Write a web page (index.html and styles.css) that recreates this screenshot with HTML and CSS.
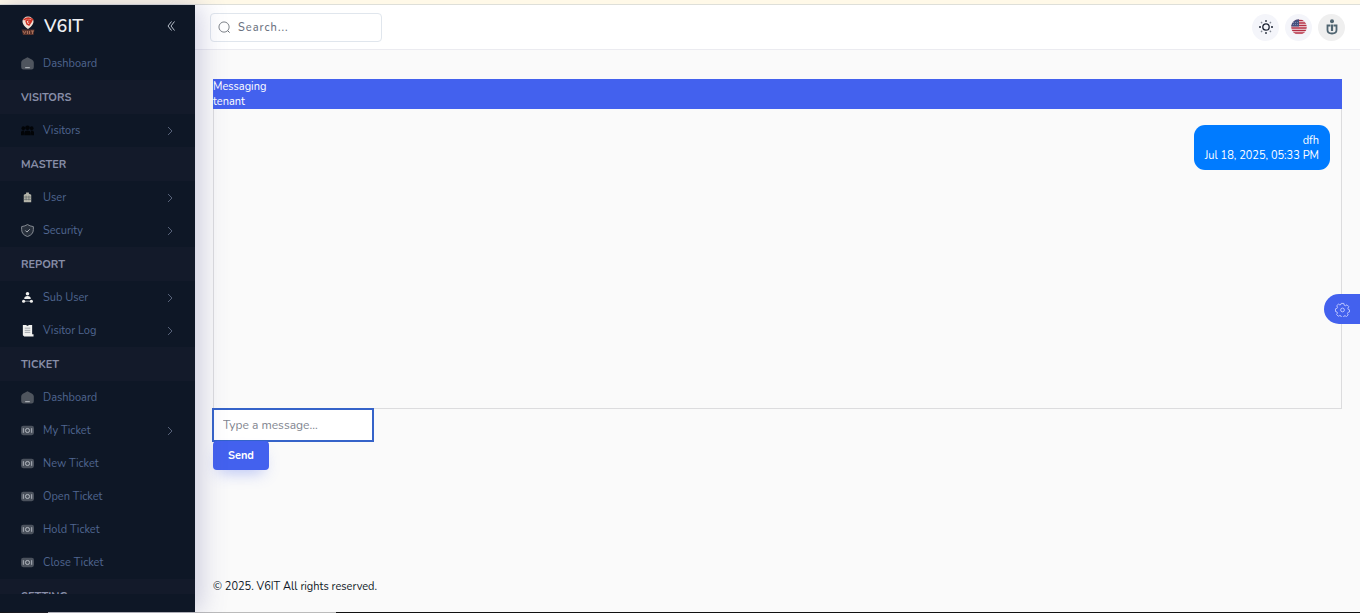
FILE: index.html
```html
<!DOCTYPE html>
<html lang="en">
<head>
    <meta charset="utf-8">
    <title>V6IT</title>
    <link rel="stylesheet" href="styles.css">
</head>
<body>
    <svg class="sprite" aria-hidden="true">
        <symbol id="home" viewBox="0 0 14 14">
            <path d="M7 .2 12 3Q13.800 4 13.800 6v5q0 2.500-2.500 2.500H2.700Q.2 13.500.2 11V6Q.2 4 2 3Z" fill="#4f555e"/>
            <path d="M4.500 11.500h5" stroke="#c3c7cc"/>
        </symbol>
        <symbol id="ticket" viewBox="0 0 14 14">
            <rect x="0" y="2" width="14" height="10" rx="2.500" fill="#4b525d"/>
            <path d="M2.500 4.500v5M11.500 4.500v5" stroke="#b5bac2"/>
            <circle cx="7" cy="7" r="2.200" fill="none" stroke="#b8bdc5"/>
        </symbol>
        <symbol id="chevron" viewBox="0 0 8 10">
            <path d="M2 1 6 5 2 9" fill="none" stroke="#566178"/>
        </symbol>
    </svg>

    <div class="top-strip"></div>
    <div class="layout">
        <nav class="sidebar">
            <div class="brand">
                <svg class="brand-logo" viewBox="0 0 16 20">
                    <path d="M8 .5a5.500 5 0 0 1 5.500 5c0 3-3.500 6.500-5.500 7.500-2-1-5.500-4.500-5.500-7.500a5.500 5 0 0 1 5.500-5Z" fill="#f1e3d8"/>
                    <path d="M3.500 4Q8 .5 12.500 3.500L11 5Q8 3 6 5l1 3 2 1 2-3H8" fill="none" stroke="#cf3326" stroke-width="1.500"/>
                    <path d="M1.500 13.500h13l-1 5.500H3Z" fill="#59332c"/>
                    <path d="M3 15l1.500 2.500L6 15M7.500 15v3M9.500 15v3M11 15h3M12.500 15v3" stroke="#a8705a" fill="none"/>
                </svg>
                <span class="brand-name">V6IT</span>
                <button class="collapse" type="button" aria-label="Collapse menu">
                    <svg viewBox="0 0 10 12"><path d="M5.500 1.500 2 6l3.500 4.500M8.500 1.500 5 6l3.500 4.500" fill="none" stroke="#b8c0cc"/></svg>
                </button>
            </div>
            <div class="menu">
                <a class="item" href="#"><svg class="icon"><use href="#home"/></svg>Dashboard</a>
                <h2>VISITORS</h2>
                <a class="item" href="#">
                    <svg class="icon" viewBox="0 0 14 14" fill="#020407">
                        <circle cx="7" cy="4" r="2.500"/><circle cx="2.500" cy="4.500" r="2"/><circle cx="11.500" cy="4.500" r="2"/>
                        <path d="M3.500 12V9.500Q4 7 7 7t3.500 2.500V12ZM0 12V8.500Q1 6.500 3.500 7L3 12ZM14 12V8.500Q13 6.500 10.500 7L11 12Z"/>
                    </svg>Visitors<svg class="arrow"><use href="#chevron"/></svg>
                </a>
                <h2>MASTER</h2>
                <a class="item" href="#">
                    <svg class="icon" viewBox="0 0 14 14">
                        <path d="M3 12V4L5.500 3V1.500h3V3L11 4v8Z" fill="#b5b5aa"/>
                        <path d="M3 6.500h8M3 9h8M5.500 5v5M8.500 5v5" stroke="#5c6365" stroke-width=".7"/>
                    </svg>User<svg class="arrow"><use href="#chevron"/></svg>
                </a>
                <a class="item" href="#">
                    <svg class="icon" viewBox="0 0 14 14">
                        <path d="M7 .6Q9.500 2.300 13.300 2.800V6q0 5.500-6.300 7.500Q.7 11.500.7 6V2.800Q4.500 2.300 7 .6Z" fill="#272f3b" stroke="#8c9299"/>
                        <path d="m4.700 7 1.700 1.700 3-3" fill="none" stroke="#b5bac0"/>
                    </svg>Security<svg class="arrow"><use href="#chevron"/></svg>
                </a>
                <h2>REPORT</h2>
                <a class="item" href="#">
                    <svg class="icon" viewBox="0 0 14 14" fill="#f0f0ee">
                        <circle cx="7" cy="3" r="1.900"/>
                        <path d="M3.500 8.500q0-3 3.500-3t3.500 3Z"/>
                        <path d="M3 11h8" fill="none" stroke="#8c929a"/>
                        <circle cx="2.800" cy="11" r="1.700"/><circle cx="11.200" cy="11" r="1.700"/>
                    </svg>Sub User<svg class="arrow"><use href="#chevron"/></svg>
                </a>
                <a class="item" href="#">
                    <svg class="icon" viewBox="0 0 14 14">
                        <path d="M2 1h10v10h1.500v2.500H3.500L2 12Z" fill="#f0f0ee"/>
                        <path d="M4 4.500h6M4 6.800h6M4 9h6" stroke="#858b93" stroke-width=".8"/>
                        <path d="M6 1.500h2" stroke="#1c2531"/>
                    </svg>Visitor Log<svg class="arrow"><use href="#chevron"/></svg>
                </a>
                <h2>TICKET</h2>
                <a class="item" href="#"><svg class="icon"><use href="#home"/></svg>Dashboard</a>
                <a class="item" href="#"><svg class="icon"><use href="#ticket"/></svg>My Ticket<svg class="arrow"><use href="#chevron"/></svg></a>
                <a class="item" href="#"><svg class="icon"><use href="#ticket"/></svg>New Ticket</a>
                <a class="item" href="#"><svg class="icon"><use href="#ticket"/></svg>Open Ticket</a>
                <a class="item" href="#"><svg class="icon"><use href="#ticket"/></svg>Hold Ticket</a>
                <a class="item" href="#"><svg class="icon"><use href="#ticket"/></svg>Close Ticket</a>
                <h2>SETTING</h2>
            </div>
        </nav>

        <div class="page">
            <header class="header">
                <form class="search">
                    <svg viewBox="0 0 14 14"><circle cx="6.500" cy="6.500" r="5.500" fill="none" stroke="#747980"/><path d="m10.500 10.500 2 2" stroke="#555b63"/></svg>
                    <input type="text" placeholder="Search..." aria-label="Search">
                </form>
                <div class="actions">
                    <button type="button" aria-label="Theme">
                        <svg viewBox="0 0 16 16" fill="none" stroke="#1d2433" stroke-width="1.300">
                            <circle cx="8" cy="8" r="3.200"/>
                            <path d="M8 1v2M8 13v2M1 8h2M13 8h2"/>
                            <path d="m3 3 1.200 1.200M11.800 11.800 13 13M13 3l-1.200 1.200M4.200 11.800 3 13" stroke="#858b96"/>
                        </svg>
                    </button>
                    <button type="button" aria-label="Language">
                        <svg viewBox="0 0 16 16">
                            <clipPath id="round"><circle cx="8" cy="8" r="7.800"/></clipPath>
                            <g clip-path="url(#round)">
                                <path d="M0 0h16v16H0Z" fill="#f3e9ec"/>
                                <path d="M0 1.500h16M0 4h16M0 6.500h16M0 9h16M0 11.500h16M0 14h16" stroke="#b52e43" stroke-width="1.300"/>
                                <path d="M0 0h8v7.500H0Z" fill="#45517e"/>
                                <path d="M2 3.500h5M2 5.500h5" stroke="#98a0bd" stroke-width=".7" stroke-dasharray="1 1"/>
                            </g>
                        </svg>
                    </button>
                    <button class="profile" type="button" aria-label="Profile">
                        <svg viewBox="0 0 16 16">
                            <circle cx="8" cy="2.300" r="2" fill="#4f6470"/>
                            <path d="M6.500 6.500h-3V11q0 3.500 4.500 3.500t4.500-3.500V6.500h-3" fill="none" stroke="#4f6470" stroke-width="1.800"/>
                            <path d="M8 5.500V12" stroke="#4f6470" stroke-width="2.200"/>
                        </svg>
                    </button>
                </div>
            </header>
            <main class="content">
                <div class="chat-head">Messaging<br>tenant</div>
                <div class="chat-box">
                    <div class="message">dfh<br>Jul 18, 2025, 05:33 PM</div>
                </div>
                <form class="chat-form">
                    <input type="text" placeholder="Type a message..." aria-label="Message">
                    <button type="button">Send</button>
                </form>
            </main>
            <footer>© 2025. V6IT All rights reserved.</footer>
        </div>
    </div>
    <div class="bottom-line"></div>
    <button class="settings" type="button" aria-label="Settings">
        <svg viewBox="0 0 16 16" fill="none" stroke="#c2caff">
            <path d="M6.600 1.500h2.800l.4 1.900 1.300.6 1.700-1 1.900 2-1 1.600.5 1.400 1.300.4v2.200l-1.600.4-.6 1.300.8 1.500-1.900 1.700-1.500-.9-1.300.5-.4 1.400H7l-.6-1.600-1.300-.5-1.600.8-1.800-1.800.9-1.600-.5-1.200-1.600-.5V7.300l1.600-.5.6-1.300-.9-1.500 1.900-1.700 1.500.8 1.200-.5Z"/>
            <circle cx="8" cy="8.500" r="2"/>
        </svg>
    </button>
</body>
</html>
```
FILE: styles.css
```css
* { box-sizing: border-box; }
body { margin: 0; height: 100vh; display: flex; flex-direction: column; overflow: hidden; background: #fafafa; color: #0e1726; font: 11px/15px Nunito, "Noto Sans", sans-serif; }
button, input { font: inherit; }
button { border: 0; padding: 0; cursor: pointer; }
svg { display: block; flex: none; }
.sprite { position: absolute; width: 0; height: 0; }
.top-strip { height: 5px; flex: none; background: #fff9e8; border-bottom: 1px solid #dedfd9; }
.layout { flex: 1; min-height: 0; display: flex; }

/* sidebar */
.sidebar { width: 195px; flex: none; display: flex; flex-direction: column; padding-bottom: 18px; background: #0e1726; box-shadow: 5px 0 25px rgba(94, 92, 154, 0.3); z-index: 2; }
.brand { height: 42px; flex: none; display: flex; align-items: center; padding: 0 19px 0 20px; }
.brand-logo { width: 16px; height: 20px; }
.brand-name { margin-left: 8px; font-size: 18px; line-height: 24px; font-weight: 600; color: #eef0f4; }
.collapse { margin-left: auto; background: none; }
.collapse svg { width: 10px; height: 12px; }
.menu { flex: 1; min-height: 0; overflow: hidden; }
.menu h2 { margin: 0; height: 34px; padding: 1px 0 0 21px; background: #131a2a; color: #888ea8; font-size: 11px; line-height: 34px; font-weight: 700; }
.item { display: flex; align-items: center; height: 33px; padding: 0 21px; color: #506690; text-decoration: none; }
.icon { width: 13px; height: 13px; margin-right: 9px; }
.arrow { width: 8px; height: 10px; margin-left: auto; }

/* page */
.page { flex: 1; min-width: 0; display: flex; flex-direction: column; }
.header { height: 45px; flex: none; display: flex; align-items: center; justify-content: space-between; padding: 0 15px; background: #fff; border-bottom: 1px solid #ebebf0; }
.search { width: 172px; height: 29px; display: flex; align-items: center; gap: 7px; padding: 0 7px; background: #fff; border: 1px solid #e0e6ed; border-radius: 4px; }
.search svg { width: 13px; height: 13px; }
.search input { width: 100%; min-width: 0; border: 0; padding: 0; outline: 0; font-weight: 500; letter-spacing: 1px; background: none; }
.search input::placeholder { color: #6b7280; }
.actions { display: flex; gap: 6px; }
.actions button { width: 27px; height: 27px; display: flex; align-items: center; justify-content: center; border-radius: 50%; background: #f4f5fa; }
.actions svg { width: 16px; height: 16px; }
.actions .profile { background: #efefef; }
.content { padding: 29px 18px 0; }
.chat-head { background: #4361ee; color: #fff; }
.chat-box { height: 300px; padding: 16px 11px; border: 1px solid #dcdcde; border-top: 0; }
.message { width: fit-content; margin-left: auto; padding: 8px 11px 7px; border-radius: 11px; background: #007bff; color: #fff; text-align: right; }
.chat-form { display: flex; flex-direction: column; align-items: flex-start; }
.chat-form input { width: 160px; height: 32px; padding: 0 9px; border: 1px solid #3563c9; outline: 1px solid #3563c9; background: #fff; font-size: 12px; }
.chat-form input::placeholder { color: #7f858f; }
.chat-form button { width: 56px; height: 29px; border-radius: 4px; background: #4361ee; color: #fff; font-weight: 700; box-shadow: 0 8px 16px -6px rgba(67, 97, 238, 0.4); }
footer { margin-top: auto; padding: 0 18px 18px; }
.bottom-line { height: 1px; flex: none; background: linear-gradient(90deg, #111 48px, #bbb 48px 336px, #111 336px); }
.settings { position: fixed; right: 0; top: 294px; width: 36px; height: 30px; display: flex; align-items: center; padding-left: 11px; border-radius: 15px 0 0 15px; background: #4361ee; z-index: 3; }
.settings svg { width: 15px; height: 15px; }
```
